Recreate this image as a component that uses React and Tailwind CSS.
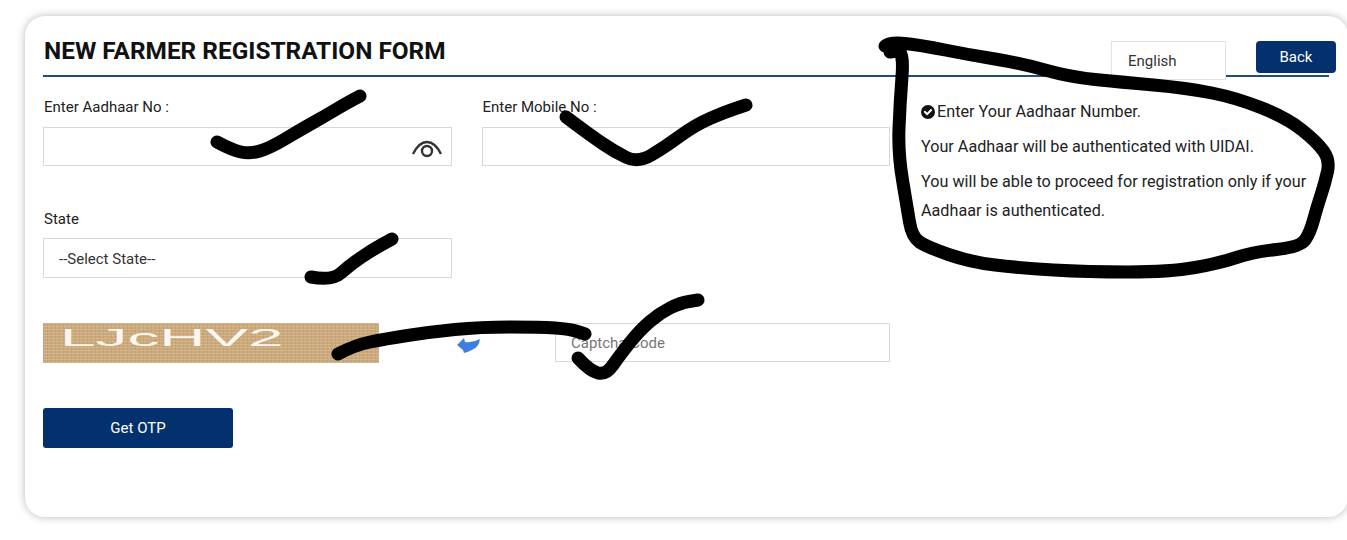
const inputCls =
  "h-[39px] border border-[#d8d8d8] bg-white px-[15px] text-[15px] text-[#333] outline-none placeholder:text-[#777]";

// marker strokes someone drew over the screenshot
const scribbles = [
  [[217, 142], [232, 150], [250, 154], [270, 148], [300, 130], [325, 116], [345, 104], [360, 96]],
  [[566, 117], [590, 135], [615, 152], [638, 163], [665, 147], [695, 125], [725, 112], [746, 105]],
  [[311, 277], [332, 281], [350, 265], [372, 250], [392, 239]],
  [[338, 354], [355, 345], [385, 339], [430, 332], [480, 327], [540, 327], [570, 329], [585, 334]],
  [[578, 358], [590, 371], [606, 375], [620, 355], [640, 330], [660, 313], [680, 303], [698, 300]],
  [
    [885, 46], [890, 42], [920, 45], [970, 55], [1020, 63], [1070, 77], [1120, 82], [1187, 88], [1237, 98],
    [1287, 118], [1317, 142], [1330, 160], [1325, 183], [1317, 207], [1310, 233], [1300, 247], [1253, 252],
    [1220, 263], [1170, 272], [1087, 272], [1020, 268], [970, 262], [927, 247], [912, 237], [907, 207],
    [898, 153], [900, 103], [904, 50], [890, 52],
  ],
];

// round the corners by curving through the midpoints
function smooth(pts) {
  let d = `M${pts[0][0]} ${pts[0][1]}`;
  for (let i = 1; i < pts.length - 1; i++) {
    const mx = (pts[i][0] + pts[i + 1][0]) / 2;
    const my = (pts[i][1] + pts[i + 1][1]) / 2;
    d += ` Q${pts[i][0]} ${pts[i][1]} ${mx} ${my}`;
  }
  const last = pts[pts.length - 1];
  return `${d} L${last[0]} ${last[1]}`;
}

function Field({ label, labelClass = "", children }) {
  return (
    <div className="w-[409px]">
      <label className={`mb-[10px] block h-[19px] pl-px text-[15px] leading-[19px] text-[#222] ${labelClass}`}>{label}</label>
      {children}
    </div>
  );
}

export default function App() {
  return (
    <div className="relative h-[540px] w-[1347px] overflow-hidden bg-white pl-[25px] pt-4 font-['Roboto',sans-serif]">
      <div className="h-[501px] w-[1323px] rounded-[20px] bg-white pl-[18px] pr-[19px] shadow-[0_0_8px_rgba(0,0,0,0.28)]">
        {/* Title row */}
        <div className="flex h-[61px] items-start justify-between border-b-2 border-[#1f4e79]">
          <h1 className="mt-5 pl-px text-[24.4px] font-bold leading-[30px] text-[#111]">NEW FARMER REGISTRATION FORM</h1>
          <div className="-mr-[7px] mt-[25px] flex items-start gap-[30px]">
            <select className="h-[39px] w-[115px] appearance-none border border-[#dde3ea] bg-white px-4 pt-[2px] text-[15px] text-[#333] outline-none">
              <option>English</option>
            </select>
            <button className="h-8 w-20 rounded bg-[#03316e] text-[15px] text-white">Back</button>
          </div>
        </div>

        <div className="flex pt-[21px]">
          <div className="w-[847px]">
            <div className="flex gap-[30px]">
              <Field label="Enter Aadhaar No :">
                <div className="relative">
                  <input className={`${inputCls} w-full`} />
                  <svg viewBox="0 0 32 18" className="absolute right-[9px] top-[13px] h-[18px] w-8 fill-none stroke-[#333] stroke-2">
                    <path d="M2 14 Q8 2 16 2 Q24 2 30 14" strokeWidth="2.4" />
                    <circle cx="16" cy="11" r="5" strokeWidth="2.4" />
                  </svg>
                </div>
              </Field>
              <Field label="Enter Mobile No :">
                <input className={`${inputCls} w-full`} />
              </Field>
            </div>

            <div className="mt-[43px]">
              <Field label="State" labelClass="pt-px">
                <select className={`${inputCls} !h-10 w-full appearance-none pt-[2px]`}>
                  <option>--Select State--</option>
                </select>
              </Field>
            </div>

            <div className="mt-[45px] flex items-start">
              <div className="h-10 w-[336px] shrink-0 overflow-hidden bg-[#cba97b] bg-[repeating-linear-gradient(0deg,rgba(255,255,255,0.16)_0_1px,transparent_1px_3px),repeating-linear-gradient(90deg,rgba(120,80,30,0.10)_0_1px,transparent_1px_4px)] pl-[17px]">
                <span className="block origin-left scale-x-[2.66] font-['Liberation_Sans',sans-serif] text-2xl leading-[30px] text-[#fbf6ee]">
                  LJcHV2
                </span>
              </div>
              <svg viewBox="0 0 30 20" className="ml-[76px] mt-3 h-5 w-[30px] shrink-0 fill-[#3f7fe0]">
                <path d="M2 10 L9 3 L10 7 Q18 8 25 4 Q24 12 17 15 Q12 17.5 9 18 L8 15 Z" />
              </svg>
              <input className={`${inputCls} ml-[70px] w-[335px]`} placeholder="Captcha Code" />
            </div>

            <button className="mt-[45px] h-10 w-[190px] rounded-[3px] bg-[#03316e] pt-px text-[15px] text-white">
              Get OTP
            </button>
          </div>

          <div className="ml-[30px] -mt-px w-[415px] pl-px text-[16.2px] text-[#222]">
            <p className="flex items-center leading-[29px]">
              <svg viewBox="0 0 16 16" className="mr-[2px] h-[14px] w-[14px] fill-[#111]">
                <path d="M8 0a8 8 0 1 0 0 16A8 8 0 0 0 8 0Zm-1 12L3 8l1.6-1.6L7 8.8l4.4-4.4L13 6Z" />
              </svg>
              Enter Your Aadhaar Number.
            </p>
            <p className="mt-[6px] leading-[29px]">Your Aadhaar will be authenticated with UIDAI.</p>
            <p className="mt-[6px] leading-[29px]">
              You will be able to proceed for registration only if your
              <br />
              Aadhaar is authenticated.
            </p>
          </div>
        </div>
      </div>

      <svg viewBox="0 0 1347 540" className="pointer-events-none absolute left-0 top-0 h-[540px] w-[1347px]">
        {scribbles.map((pts) => (
          <path key={pts[0][0]} d={smooth(pts)} fill="none" stroke="#000" strokeWidth="13" strokeLinecap="round" strokeLinejoin="round" />
        ))}
      </svg>
    </div>
  );
}
